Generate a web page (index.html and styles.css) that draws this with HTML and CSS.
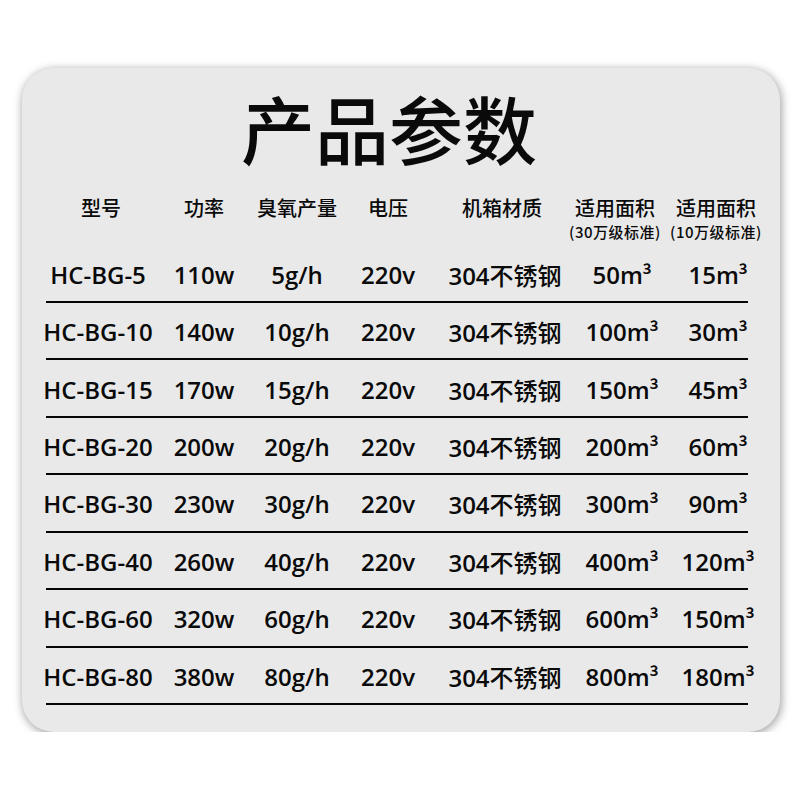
FILE: index.html
```html
<!DOCTYPE html>
<html lang="zh-CN">
<head>
<meta charset="utf-8">
<title>产品参数</title>
<link rel="stylesheet" href="styles.css">
</head>
<body>
<div class="card">
  <h1 class="title">产品参数</h1>
  <div class="table">
    <div class="head">
      <div class="cell"><span class="hmain">型号</span></div>
      <div class="cell"><span class="hmain">功率</span></div>
      <div class="cell"><span class="hmain">臭氧产量</span></div>
      <div class="cell"><span class="hmain">电压</span></div>
      <div class="cell c5"><span class="hmain">机箱材质</span></div>
      <div class="cell c6"><span class="hmain">适用面积</span><span class="hsub">(30万级标准)</span></div>
      <div class="cell c7"><span class="hmain">适用面积</span><span class="hsub">(10万级标准)</span></div>
    </div>
    <div class="row"><div class="cells">
      <div class="cell">HC-BG-5</div><div class="cell">110w</div><div class="cell">5g/h</div><div class="cell">220v</div><div class="cell">304<span class="cn">不锈钢</span></div><div class="cell">50m³</div><div class="cell">15m³</div>
    </div></div>
    <div class="row"><div class="cells">
      <div class="cell">HC-BG-10</div><div class="cell">140w</div><div class="cell">10g/h</div><div class="cell">220v</div><div class="cell">304<span class="cn">不锈钢</span></div><div class="cell">100m³</div><div class="cell">30m³</div>
    </div></div>
    <div class="row"><div class="cells">
      <div class="cell">HC-BG-15</div><div class="cell">170w</div><div class="cell">15g/h</div><div class="cell">220v</div><div class="cell">304<span class="cn">不锈钢</span></div><div class="cell">150m³</div><div class="cell">45m³</div>
    </div></div>
    <div class="row"><div class="cells">
      <div class="cell">HC-BG-20</div><div class="cell">200w</div><div class="cell">20g/h</div><div class="cell">220v</div><div class="cell">304<span class="cn">不锈钢</span></div><div class="cell">200m³</div><div class="cell">60m³</div>
    </div></div>
    <div class="row"><div class="cells">
      <div class="cell">HC-BG-30</div><div class="cell">230w</div><div class="cell">30g/h</div><div class="cell">220v</div><div class="cell">304<span class="cn">不锈钢</span></div><div class="cell">300m³</div><div class="cell">90m³</div>
    </div></div>
    <div class="row"><div class="cells">
      <div class="cell">HC-BG-40</div><div class="cell">260w</div><div class="cell">40g/h</div><div class="cell">220v</div><div class="cell">304<span class="cn">不锈钢</span></div><div class="cell">400m³</div><div class="cell">120m³</div>
    </div></div>
    <div class="row"><div class="cells">
      <div class="cell">HC-BG-60</div><div class="cell">320w</div><div class="cell">60g/h</div><div class="cell">220v</div><div class="cell">304<span class="cn">不锈钢</span></div><div class="cell">600m³</div><div class="cell">150m³</div>
    </div></div>
    <div class="row"><div class="cells">
      <div class="cell">HC-BG-80</div><div class="cell">380w</div><div class="cell">80g/h</div><div class="cell">220v</div><div class="cell">304<span class="cn">不锈钢</span></div><div class="cell">800m³</div><div class="cell">180m³</div>
    </div></div>
  </div>
</div>
</body>
</html>
```
FILE: styles.css
```css
* { box-sizing: border-box; }
html, body {
  margin: 0;
  padding: 0;
  background: #ffffff;
}
body {
  font-family: "Open Sans", "Noto Sans CJK SC", sans-serif;
  color: #0a0a0a;
  padding: 68px 0 0 22px;
}
.card {
  width: 758px;
  height: 664px;
  background: #e9e9e9;
  border-radius: 32px;
  box-shadow: 1px 2px 9px 1px rgba(0, 0, 0, 0.35);
  padding: 22px 0 0 24px;
}
.title {
  margin: 0;
  font-family: "Noto Sans CJK SC", sans-serif;
  font-weight: 500;
  font-size: 74px;
  line-height: 74px;
  height: 74px;
  padding-left: 195px;
}
.head, .cells {
  display: grid;
  grid-template-columns: 104px 108px 78px 104px 130px 104px 88px;
  width: 716px;
}
.head {
  height: 81.6px;
  padding-top: 32px;
  align-items: start;
}
.cell {
  display: flex;
  flex-direction: column;
  align-items: center;
  white-space: nowrap;
}
.head .cell:first-child { padding-left: 6px; }
.head .c5 { padding-right: 6px; }
.head .c6 { padding-right: 14px; }
.head .c7 { padding-right: 4px; }
.hmain {
  font-family: "Noto Sans CJK SC", sans-serif;
  font-weight: 500;
  font-size: 20px;
  line-height: 24px;
}
.hsub {
  font-family: "Noto Sans CJK SC", sans-serif;
  font-weight: 500;
  font-size: 15px;
  line-height: 20px;
  margin-top: 2px;
  letter-spacing: 0.5px;
}
.row {
  width: 702px;
  height: 57.43px;
  border-bottom: 2.5px solid #050505;
  display: flex;
  align-items: center;
  padding-top: 4px;
}
.cells {
  font-weight: 600;
  font-size: 24px;
  line-height: 30px;
}
.cells .cell {
  flex-direction: row;
  justify-content: center;
  align-items: baseline;
}
.cn {
  font-family: "Noto Sans CJK SC", sans-serif;
  font-weight: 500;
}
```
